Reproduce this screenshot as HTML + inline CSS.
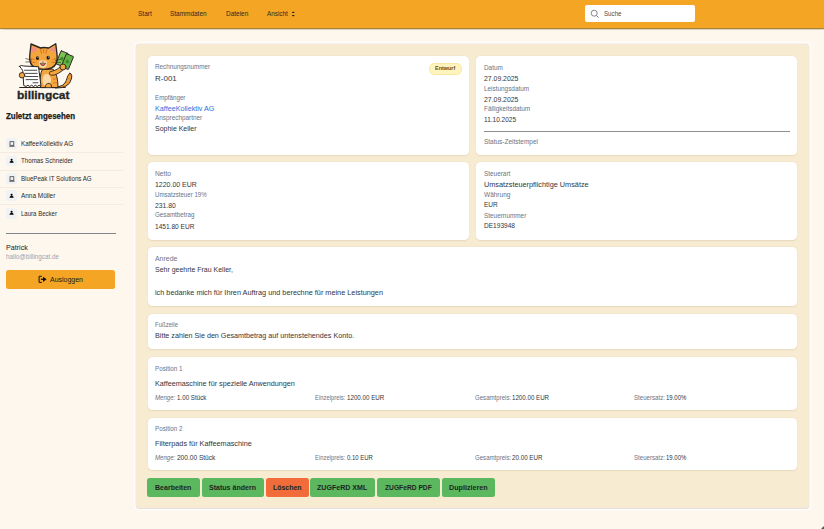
<!DOCTYPE html>
<html><head><meta charset="utf-8"><style>
html,body{margin:0;padding:0;width:824px;height:529px;overflow:hidden;background:#FEF7EE;font-family:"Liberation Sans",sans-serif}
.t{position:absolute;white-space:nowrap}
.b{position:absolute}
</style></head><body>
<div class="b" style="left:0.00px;top:0.00px;width:824.00px;height:28.00px;background:#F4A524;border-radius:0px;box-shadow:0 1px 0 #A88534, 0 1.6px 1px rgba(120,100,60,.25);z-index:2"></div>
<div class="t" style="left:137.60px;top:10.02px;font-size:7px;line-height:7px;color:#2E2A22;font-weight:normal;font-style:normal;transform:scaleX(0.934);transform-origin:0 0;z-index:3">Start</div>
<div class="t" style="left:170.40px;top:10.02px;font-size:7px;line-height:7px;color:#2E2A22;font-weight:normal;font-style:normal;transform:scaleX(0.922);transform-origin:0 0;z-index:3">Stammdaten</div>
<div class="t" style="left:225.60px;top:10.02px;font-size:7px;line-height:7px;color:#2E2A22;font-weight:normal;font-style:normal;transform:scaleX(0.924);transform-origin:0 0;z-index:3">Dateien</div>
<div class="t" style="left:266.90px;top:10.02px;font-size:7px;line-height:7px;color:#2E2A22;font-weight:normal;font-style:normal;transform:scaleX(0.902);transform-origin:0 0;z-index:3">Ansicht</div>
<svg class="b" style="left:291.3px;top:10.8px;z-index:3" width="4.5" height="6" viewBox="0 0 4.5 6"><path d="M0.6 2.1 L2.25 0.4 L3.9 2.1 Z M0.6 3.9 L2.25 5.6 L3.9 3.9 Z" fill="#1E1E1E"/></svg>
<div class="b" style="left:585.00px;top:4.50px;width:110.30px;height:17.90px;background:#FFFFFF;border-radius:2px;z-index:3"></div>
<svg class="b" style="left:589.5px;top:8.5px;z-index:4" width="10" height="10" viewBox="0 0 10 10"><circle cx="4.2" cy="4.2" r="3" stroke="#6B6B6B" stroke-width="0.8" fill="none"/><path d="M6.4 6.4 L8.6 8.6" stroke="#6B6B6B" stroke-width="0.9"/></svg>
<div class="t" style="left:604.00px;top:10.74px;font-size:6.5px;line-height:6.5px;color:#4A4A4A;font-weight:normal;font-style:normal;transform:scaleX(0.950);transform-origin:0 0;z-index:4">Suche</div>
<svg class="b" style="left:14px;top:38px" width="64.125" height="52" viewBox="0 0 513 416">
  <g stroke="#2A2420" stroke-linejoin="round" stroke-linecap="round">
  <!-- ground -->
  <path d="M46 396 H410" stroke-width="9"/>
  <!-- tail -->
  <path d="M330 392 Q400 392 418 340 Q428 300 446 280 Q470 290 458 330 Q440 405 330 400 Z" fill="#F2A23A" stroke-width="8"/>
  <path d="M395 378 L410 390 M414 352 L432 360 M426 322 L446 328 M436 296 L455 300" stroke="#D9741E" stroke-width="7"/>
  <!-- body -->
  <path d="M212 394 Q200 300 228 250 L310 248 Q352 290 352 394 Z" fill="#F4A63E" stroke-width="8"/>
  <ellipse cx="262" cy="338" rx="34" ry="52" fill="#FBD9A8" stroke="none"/>
  <path d="M305 300 L325 296 M315 330 L338 326 M318 360 L342 356" stroke="#D9741E" stroke-width="7"/>
  <path d="M250 394 Q250 362 282 362 Q306 368 300 394" fill="#F4A63E" stroke-width="7"/>
  <!-- raised arm -->
  <path d="M300 282 Q345 280 392 232" fill="none" stroke="#2A2420" stroke-width="38"/>
  <path d="M300 282 Q345 280 392 232" fill="none" stroke="#F4A63E" stroke-width="26"/>
  <!-- money -->
  <g transform="rotate(22 410 180)">
    <rect x="350" y="120" width="62" height="112" rx="4" fill="#7CC454" stroke-width="7"/>
    <rect x="398" y="126" width="62" height="112" rx="4" fill="#66B446" stroke-width="7"/>
    <circle cx="381" cy="176" r="14" fill="#3E8A2E" stroke="none"/>
    <circle cx="429" cy="182" r="14" fill="#3E8A2E" stroke="none"/>
  </g>
  <circle cx="392" cy="232" r="24" fill="#F4A63E" stroke-width="7"/>
  <!-- head -->
  <path d="M126 140 L136 48 L212 80 Q235 72 278 80 L334 46 L345 140 Q352 215 300 240 Q235 262 172 240 Q118 215 126 140 Z" fill="#F4A63E" stroke-width="11"/>
  <path d="M146 68 L192 90 L146 118 Z M322 68 L282 90 L328 118 Z" fill="#F08C8C" stroke="none"/>
  <path d="M262 185 Q231 170 200 185 Q190 235 231 240 Q272 235 262 185 Z" fill="#FBD9A8" stroke="none"/>
  <path d="M212 92 L220 122 M238 86 L238 118 M264 92 L256 122 M140 165 L162 172 M332 165 L310 172 M150 195 L168 194 M320 195 L302 194" stroke="#D9741E" stroke-width="8"/>
  <ellipse cx="188" cy="160" rx="13" ry="15" fill="#221A16" stroke="none"/>
  <ellipse cx="273" cy="157" rx="13" ry="15" fill="#221A16" stroke="none"/>
  <circle cx="192" cy="154" r="4" fill="#FFF" stroke="none"/>
  <circle cx="277" cy="151" r="4" fill="#FFF" stroke="none"/>
  <ellipse cx="231" cy="190" rx="8" ry="5" fill="#C65A4A" stroke="none"/>
  <path d="M210 205 Q231 240 252 205 Z" fill="#E8606A" stroke-width="5"/>
  <path d="M95 165 L140 175 M95 192 L140 190 M330 180 L372 170 M330 195 L372 195" stroke-width="5"/>
  <!-- paper -->
  <path d="M44 226 Q60 214 78 224 L196 230 L216 386 L201 378 L186 388 L171 378 L156 388 L141 378 L126 388 L111 378 L96 388 L78 380 L70 262 Q62 246 44 226 Z" fill="#FFFFFF" stroke-width="8"/>
  <path d="M84 258 H182 M88 283 H186 M92 308 H190 M96 333 H188 M152 358 H192" stroke="#4A4A4A" stroke-width="8"/>
  <circle cx="64" cy="298" r="22" fill="#F4A63E" stroke-width="7"/>
  </g>
</svg>

<div class="t" style="left:17.10px;top:89.84px;font-size:11.5px;line-height:11.5px;color:#1E2626;font-weight:bold;font-style:normal;transform:scaleX(1.040);transform-origin:0 0;-webkit-text-stroke:0.3px #1E2626">billingcat</div>
<div class="t" style="left:6.00px;top:112.31px;font-size:8.8px;line-height:8.8px;color:#1A1A1A;font-weight:bold;font-style:normal;transform:scaleX(0.899);transform-origin:0 0;-webkit-text-stroke:0.25px #1A1A1A">Zuletzt angesehen</div>
<div class="b" style="left:5.80px;top:138.10px;width:11.20px;height:10.90px;background:#F0F2F4;border-radius:2px;"></div>
<svg class="b" style="left:8.6px;top:140.70px" width="6" height="6" viewBox="0 0 6 6"><rect x="1" y="0.7" width="3.8" height="3.6" fill="none" stroke="#444" stroke-width="0.8"/><path d="M0.3 5.3 H5.6" stroke="#444" stroke-width="0.8"/></svg>
<div class="t" style="left:20.80px;top:140.08px;font-size:7.4px;line-height:7.4px;color:#2A2A2A;font-weight:normal;font-style:normal;transform:scaleX(0.854);transform-origin:0 0;">KaffeeKollektiv AG</div>
<div class="b" style="left:0.00px;top:152.20px;width:123.00px;height:0.60px;background:#F4ECE2;border-radius:0px;"></div>
<div class="b" style="left:5.80px;top:155.50px;width:11.20px;height:10.90px;background:#F0F2F4;border-radius:2px;"></div>
<svg class="b" style="left:8.6px;top:158.10px" width="6" height="6" viewBox="0 0 6 6"><circle cx="2.6" cy="1.7" r="1.05" fill="#000"/><path d="M0.5 4.8 Q0.6 3.3 1.9 3.0 L2.0 2.4 H3.2 L3.3 3.0 Q4.6 3.3 4.7 4.8 Z" fill="#000"/></svg>
<div class="t" style="left:20.80px;top:157.48px;font-size:7.4px;line-height:7.4px;color:#2A2A2A;font-weight:normal;font-style:normal;transform:scaleX(0.837);transform-origin:0 0;">Thomas Schneider</div>
<div class="b" style="left:0.00px;top:169.60px;width:123.00px;height:0.60px;background:#F4ECE2;border-radius:0px;"></div>
<div class="b" style="left:5.80px;top:172.90px;width:11.20px;height:10.90px;background:#F0F2F4;border-radius:2px;"></div>
<svg class="b" style="left:8.6px;top:175.50px" width="6" height="6" viewBox="0 0 6 6"><rect x="1" y="0.7" width="3.8" height="3.6" fill="none" stroke="#444" stroke-width="0.8"/><path d="M0.3 5.3 H5.6" stroke="#444" stroke-width="0.8"/></svg>
<div class="t" style="left:20.80px;top:174.88px;font-size:7.4px;line-height:7.4px;color:#2A2A2A;font-weight:normal;font-style:normal;transform:scaleX(0.832);transform-origin:0 0;">BluePeak IT Solutions AG</div>
<div class="b" style="left:0.00px;top:187.00px;width:123.00px;height:0.60px;background:#F4ECE2;border-radius:0px;"></div>
<div class="b" style="left:5.80px;top:190.30px;width:11.20px;height:10.90px;background:#F0F2F4;border-radius:2px;"></div>
<svg class="b" style="left:8.6px;top:192.90px" width="6" height="6" viewBox="0 0 6 6"><circle cx="2.6" cy="1.7" r="1.05" fill="#000"/><path d="M0.5 4.8 Q0.6 3.3 1.9 3.0 L2.0 2.4 H3.2 L3.3 3.0 Q4.6 3.3 4.7 4.8 Z" fill="#000"/></svg>
<div class="t" style="left:20.80px;top:192.28px;font-size:7.4px;line-height:7.4px;color:#2A2A2A;font-weight:normal;font-style:normal;transform:scaleX(0.871);transform-origin:0 0;">Anna Müller</div>
<div class="b" style="left:0.00px;top:204.40px;width:123.00px;height:0.60px;background:#F4ECE2;border-radius:0px;"></div>
<div class="b" style="left:5.80px;top:207.70px;width:11.20px;height:10.90px;background:#F0F2F4;border-radius:2px;"></div>
<svg class="b" style="left:8.6px;top:210.30px" width="6" height="6" viewBox="0 0 6 6"><circle cx="2.6" cy="1.7" r="1.05" fill="#000"/><path d="M0.5 4.8 Q0.6 3.3 1.9 3.0 L2.0 2.4 H3.2 L3.3 3.0 Q4.6 3.3 4.7 4.8 Z" fill="#000"/></svg>
<div class="t" style="left:20.80px;top:209.68px;font-size:7.4px;line-height:7.4px;color:#2A2A2A;font-weight:normal;font-style:normal;transform:scaleX(0.818);transform-origin:0 0;">Laura Becker</div>
<div class="b" style="left:5.80px;top:232.70px;width:109.80px;height:1.00px;background:#80858C;border-radius:0px;"></div>
<div class="t" style="left:5.80px;top:243.50px;font-size:7.5px;line-height:7.5px;color:#1A1A1A;font-weight:normal;font-style:normal;transform:scaleX(0.951);transform-origin:0 0;">Patrick</div>
<div class="t" style="left:5.80px;top:254.24px;font-size:6.5px;line-height:6.5px;color:#9AA3AF;font-weight:normal;font-style:normal;transform:scaleX(0.970);transform-origin:0 0;">hallo@billingcat.de</div>
<div class="b" style="left:5.80px;top:270.30px;width:109.50px;height:18.30px;background:#F4A524;border-radius:2.5px;"></div>
<svg class="b" style="left:37.5px;top:275px" width="10" height="9" viewBox="0 0 10 9"><path d="M3.4 1.3 H1.1 V7.4 H3.4" stroke="#111" stroke-width="1" fill="none" stroke-linejoin="round" stroke-linecap="round"/><path d="M2.9 4.3 H6" stroke="#111" stroke-width="1.3"/><path d="M5.0 1.7 L8.6 4.3 L5.0 6.9 Z" fill="#111"/></svg>
<div class="t" style="left:49.90px;top:275.50px;font-size:7.5px;line-height:7.5px;color:#1A1A1A;font-weight:normal;font-style:normal;transform:scaleX(0.931);transform-origin:0 0;">Ausloggen</div>
<div class="b" style="left:136.30px;top:44.40px;width:672.40px;height:463.80px;background:#F7EBD1;border-radius:3.5px;box-shadow:0 0 0 0.5px rgba(175,170,165,.22), 0 0.6px 0.8px rgba(140,140,150,.2), 0 0 2.5px 1.8px rgba(255,255,255,.9)"></div>
<div class="b" style="left:147.60px;top:55.70px;width:321.00px;height:99.00px;background:#FFFFFF;border-radius:4.5px;box-shadow:0 0.5px 1.5px rgba(120,90,40,.12)"></div>
<div class="b" style="left:476.20px;top:55.70px;width:321.00px;height:99.00px;background:#FFFFFF;border-radius:4.5px;box-shadow:0 0.5px 1.5px rgba(120,90,40,.12)"></div>
<div class="b" style="left:147.60px;top:162.00px;width:321.00px;height:77.50px;background:#FFFFFF;border-radius:4.5px;box-shadow:0 0.5px 1.5px rgba(120,90,40,.12)"></div>
<div class="b" style="left:476.20px;top:162.00px;width:321.00px;height:77.50px;background:#FFFFFF;border-radius:4.5px;box-shadow:0 0.5px 1.5px rgba(120,90,40,.12)"></div>
<div class="b" style="left:147.60px;top:247.00px;width:649.60px;height:58.90px;background:#FFFFFF;border-radius:4.5px;box-shadow:0 0.5px 1.5px rgba(120,90,40,.12)"></div>
<div class="b" style="left:147.60px;top:313.50px;width:649.60px;height:35.80px;background:#FFFFFF;border-radius:4.5px;box-shadow:0 0.5px 1.5px rgba(120,90,40,.12)"></div>
<div class="b" style="left:147.60px;top:356.80px;width:649.60px;height:53.30px;background:#FFFFFF;border-radius:4.5px;box-shadow:0 0.5px 1.5px rgba(120,90,40,.12)"></div>
<div class="b" style="left:147.60px;top:417.50px;width:649.60px;height:52.80px;background:#FFFFFF;border-radius:4.5px;box-shadow:0 0.5px 1.5px rgba(120,90,40,.12)"></div>
<div class="t" style="left:155.00px;top:64.32px;font-size:6.4px;line-height:6.4px;color:#6B7385;font-weight:normal;font-style:normal;transform:scaleX(0.988);transform-origin:0 0;">Rechnungsnummer</div>
<div class="t" style="left:155.00px;top:74.78px;font-size:8px;line-height:8px;color:#33363C;font-weight:normal;font-style:normal;">R-001</div>
<div class="t" style="left:155.00px;top:94.62px;font-size:6.4px;line-height:6.4px;color:#6B7385;font-weight:normal;font-style:normal;transform:scaleX(0.974);transform-origin:0 0;">Empfänger</div>
<div class="t" style="left:155.00px;top:104.97px;font-size:7.3px;line-height:7.3px;color:#2F6FE0;font-weight:normal;font-style:normal;transform:scaleX(0.985);transform-origin:0 0;">KaffeeKollektiv AG</div>
<div class="t" style="left:155.00px;top:115.42px;font-size:6.4px;line-height:6.4px;color:#6B7385;font-weight:normal;font-style:normal;">Ansprechpartner</div>
<div class="t" style="left:155.00px;top:125.47px;font-size:7.3px;line-height:7.3px;color:#33363C;font-weight:normal;font-style:normal;transform:scaleX(0.958);transform-origin:0 0;">Sophie Keller</div>
<div class="b" style="left:428.50px;top:62.60px;width:33.50px;height:12.20px;background:#FEF4BE;border-radius:6px;box-shadow:inset 0 0 0 0.7px #F8E49C"></div>
<div class="t" style="left:435.00px;top:66.03px;font-size:5.8px;line-height:5.8px;color:#6E4A10;font-weight:bold;font-style:normal;transform:scaleX(0.940);transform-origin:0 0;">Entwurf</div>
<div class="t" style="left:484.00px;top:64.72px;font-size:6.4px;line-height:6.4px;color:#6B7385;font-weight:normal;font-style:normal;">Datum</div>
<div class="t" style="left:484.00px;top:74.87px;font-size:7.3px;line-height:7.3px;color:#33363C;font-weight:normal;font-style:normal;transform:scaleX(0.942);transform-origin:0 0;">27.09.2025</div>
<div class="t" style="left:484.00px;top:85.52px;font-size:6.4px;line-height:6.4px;color:#6B7385;font-weight:normal;font-style:normal;">Leistungsdatum</div>
<div class="t" style="left:484.00px;top:95.77px;font-size:7.3px;line-height:7.3px;color:#33363C;font-weight:normal;font-style:normal;transform:scaleX(0.942);transform-origin:0 0;">27.09.2025</div>
<div class="t" style="left:484.00px;top:106.32px;font-size:6.4px;line-height:6.4px;color:#6B7385;font-weight:normal;font-style:normal;">Fälligkeitsdatum</div>
<div class="t" style="left:484.00px;top:115.87px;font-size:7.3px;line-height:7.3px;color:#33363C;font-weight:normal;font-style:normal;transform:scaleX(0.889);transform-origin:0 0;">11.10.2025</div>
<div class="b" style="left:484.00px;top:131.20px;width:305.80px;height:1.00px;background:#8E8E8E;border-radius:0px;"></div>
<div class="t" style="left:484.00px;top:138.82px;font-size:6.4px;line-height:6.4px;color:#6B7385;font-weight:normal;font-style:normal;transform:scaleX(1.012);transform-origin:0 0;">Status-Zeitstempel</div>
<div class="t" style="left:155.00px;top:170.62px;font-size:6.4px;line-height:6.4px;color:#6B7385;font-weight:normal;font-style:normal;transform:scaleX(1.046);transform-origin:0 0;">Netto</div>
<div class="t" style="left:155.00px;top:180.87px;font-size:7.3px;line-height:7.3px;color:#33363C;font-weight:normal;font-style:normal;transform:scaleX(0.954);transform-origin:0 0;">1220.00 EUR</div>
<div class="t" style="left:155.00px;top:191.62px;font-size:6.4px;line-height:6.4px;color:#6B7385;font-weight:normal;font-style:normal;transform:scaleX(0.956);transform-origin:0 0;">Umsatzsteuer 19%</div>
<div class="t" style="left:155.00px;top:201.77px;font-size:7.3px;line-height:7.3px;color:#33363C;font-weight:normal;font-style:normal;transform:scaleX(0.932);transform-origin:0 0;">231.80</div>
<div class="t" style="left:155.00px;top:212.42px;font-size:6.4px;line-height:6.4px;color:#6B7385;font-weight:normal;font-style:normal;transform:scaleX(0.974);transform-origin:0 0;">Gesamtbetrag</div>
<div class="t" style="left:155.00px;top:222.67px;font-size:7.3px;line-height:7.3px;color:#33363C;font-weight:normal;font-style:normal;transform:scaleX(0.899);transform-origin:0 0;">1451.80 EUR</div>
<div class="t" style="left:484.00px;top:170.62px;font-size:6.4px;line-height:6.4px;color:#6B7385;font-weight:normal;font-style:normal;">Steuerart</div>
<div class="t" style="left:484.00px;top:180.67px;font-size:7.3px;line-height:7.3px;color:#33363C;font-weight:normal;font-style:normal;">Umsatzsteuerpflichtige Umsätze</div>
<div class="t" style="left:484.00px;top:191.62px;font-size:6.4px;line-height:6.4px;color:#6B7385;font-weight:normal;font-style:normal;transform:scaleX(1.017);transform-origin:0 0;">Währung</div>
<div class="t" style="left:484.00px;top:201.47px;font-size:7.3px;line-height:7.3px;color:#33363C;font-weight:normal;font-style:normal;transform:scaleX(0.895);transform-origin:0 0;">EUR</div>
<div class="t" style="left:484.00px;top:212.52px;font-size:6.4px;line-height:6.4px;color:#6B7385;font-weight:normal;font-style:normal;">Steuernummer</div>
<div class="t" style="left:484.00px;top:222.17px;font-size:7.3px;line-height:7.3px;color:#33363C;font-weight:normal;font-style:normal;transform:scaleX(0.899);transform-origin:0 0;">DE193948</div>
<div class="t" style="left:155.00px;top:256.32px;font-size:6.4px;line-height:6.4px;color:#6B7385;font-weight:normal;font-style:normal;transform:scaleX(1.085);transform-origin:0 0;">Anrede</div>
<div class="t" style="left:155.00px;top:266.17px;font-size:7.3px;line-height:7.3px;color:#33363C;font-weight:normal;font-style:normal;transform:scaleX(0.956);transform-origin:0 0;">Sehr geehrte Frau Keller,</div>
<div class="t" style="left:155.00px;top:288.87px;font-size:7.3px;line-height:7.3px;color:#33363C;font-weight:normal;font-style:normal;">ich bedanke mich für Ihren Auftrag und berechne für meine Leistungen</div>
<div class="t" style="left:155.00px;top:322.42px;font-size:6.4px;line-height:6.4px;color:#6B7385;font-weight:normal;font-style:normal;transform:scaleX(0.937);transform-origin:0 0;">Fußzeile</div>
<div class="t" style="left:155.00px;top:332.27px;font-size:7.3px;line-height:7.3px;color:#33363C;font-weight:normal;font-style:normal;transform:scaleX(0.984);transform-origin:0 0;">Bitte zahlen Sie den Gesamtbetrag auf untenstehendes Konto.</div>
<div class="t" style="left:155.00px;top:365.62px;font-size:6.4px;line-height:6.4px;color:#6B7385;font-weight:normal;font-style:normal;transform:scaleX(0.978);transform-origin:0 0;">Position 1</div>
<div class="t" style="left:155.00px;top:379.87px;font-size:7.3px;line-height:7.3px;color:#33363C;font-weight:normal;font-style:normal;transform:scaleX(0.989);transform-origin:0 0;">Kaffeemaschine für spezielle Anwendungen</div>
<div class="t" style="left:155.00px;top:394.76px;font-size:6.6px;line-height:6.6px;color:#6B7385;font-weight:normal;font-style:italic;transform:scaleX(0.922);transform-origin:0 0;">Menge:</div>
<div class="t" style="left:176.90px;top:394.76px;font-size:6.6px;line-height:6.6px;color:#33363C;font-weight:normal;font-style:normal;transform:scaleX(0.943);transform-origin:0 0;">1.00 Stück</div>
<div class="t" style="left:314.90px;top:394.76px;font-size:6.6px;line-height:6.6px;color:#6B7385;font-weight:normal;font-style:normal;transform:scaleX(0.888);transform-origin:0 0;">Einzelpreis:</div>
<div class="t" style="left:347.40px;top:394.76px;font-size:6.6px;line-height:6.6px;color:#33363C;font-weight:normal;font-style:normal;transform:scaleX(0.941);transform-origin:0 0;">1200.00 EUR</div>
<div class="t" style="left:474.60px;top:394.76px;font-size:6.6px;line-height:6.6px;color:#6B7385;font-weight:normal;font-style:normal;transform:scaleX(0.922);transform-origin:0 0;">Gesamtpreis:</div>
<div class="t" style="left:512.10px;top:394.76px;font-size:6.6px;line-height:6.6px;color:#33363C;font-weight:normal;font-style:normal;transform:scaleX(0.936);transform-origin:0 0;">1200.00 EUR</div>
<div class="t" style="left:633.60px;top:394.76px;font-size:6.6px;line-height:6.6px;color:#6B7385;font-weight:normal;font-style:normal;transform:scaleX(0.926);transform-origin:0 0;">Steuersatz:</div>
<div class="t" style="left:666.30px;top:394.76px;font-size:6.6px;line-height:6.6px;color:#33363C;font-weight:normal;font-style:normal;transform:scaleX(0.907);transform-origin:0 0;">19.00%</div>
<div class="t" style="left:155.00px;top:426.02px;font-size:6.4px;line-height:6.4px;color:#6B7385;font-weight:normal;font-style:normal;transform:scaleX(0.978);transform-origin:0 0;">Position 2</div>
<div class="t" style="left:155.00px;top:440.27px;font-size:7.3px;line-height:7.3px;color:#33363C;font-weight:normal;font-style:normal;">Filterpads für Kaffeemaschine</div>
<div class="t" style="left:155.00px;top:455.16px;font-size:6.6px;line-height:6.6px;color:#6B7385;font-weight:normal;font-style:italic;transform:scaleX(0.922);transform-origin:0 0;">Menge:</div>
<div class="t" style="left:176.90px;top:455.16px;font-size:6.6px;line-height:6.6px;color:#33363C;font-weight:normal;font-style:normal;">200.00 Stück</div>
<div class="t" style="left:314.90px;top:455.16px;font-size:6.6px;line-height:6.6px;color:#6B7385;font-weight:normal;font-style:normal;transform:scaleX(0.888);transform-origin:0 0;">Einzelpreis:</div>
<div class="t" style="left:347.40px;top:455.16px;font-size:6.6px;line-height:6.6px;color:#33363C;font-weight:normal;font-style:normal;transform:scaleX(0.902);transform-origin:0 0;">0.10 EUR</div>
<div class="t" style="left:474.60px;top:455.16px;font-size:6.6px;line-height:6.6px;color:#6B7385;font-weight:normal;font-style:normal;transform:scaleX(0.922);transform-origin:0 0;">Gesamtpreis:</div>
<div class="t" style="left:512.10px;top:455.16px;font-size:6.6px;line-height:6.6px;color:#33363C;font-weight:normal;font-style:normal;transform:scaleX(0.945);transform-origin:0 0;">20.00 EUR</div>
<div class="t" style="left:633.60px;top:455.16px;font-size:6.6px;line-height:6.6px;color:#6B7385;font-weight:normal;font-style:normal;transform:scaleX(0.926);transform-origin:0 0;">Steuersatz:</div>
<div class="t" style="left:666.30px;top:455.16px;font-size:6.6px;line-height:6.6px;color:#33363C;font-weight:normal;font-style:normal;transform:scaleX(0.907);transform-origin:0 0;">19.00%</div>
<div class="b" style="left:147.40px;top:478.30px;width:52.20px;height:18.70px;background:#5CB85F;border-radius:2.5px;"></div>
<div class="t" style="left:155.30px;top:484.89px;font-size:6.8px;line-height:6.8px;color:#20261F;font-weight:bold;font-style:normal;transform:scaleX(1.036);transform-origin:0 0;">Bearbeiten</div>
<div class="b" style="left:201.60px;top:478.30px;width:62.30px;height:18.70px;background:#5CB85F;border-radius:2.5px;"></div>
<div class="t" style="left:209.25px;top:484.89px;font-size:6.8px;line-height:6.8px;color:#20261F;font-weight:bold;font-style:normal;transform:scaleX(1.037);transform-origin:0 0;">Status ändern</div>
<div class="b" style="left:265.60px;top:478.30px;width:43.20px;height:18.70px;background:#F26B3B;border-radius:2.5px;"></div>
<div class="t" style="left:272.95px;top:484.89px;font-size:6.8px;line-height:6.8px;color:#20261F;font-weight:bold;font-style:normal;transform:scaleX(1.019);transform-origin:0 0;">Löschen</div>
<div class="b" style="left:310.40px;top:478.30px;width:64.40px;height:18.70px;background:#5CB85F;border-radius:2.5px;"></div>
<div class="t" style="left:317.45px;top:484.89px;font-size:6.8px;line-height:6.8px;color:#20261F;font-weight:bold;font-style:normal;transform:scaleX(1.040);transform-origin:0 0;">ZUGFeRD XML</div>
<div class="b" style="left:377.20px;top:478.30px;width:62.40px;height:18.70px;background:#5CB85F;border-radius:2.5px;"></div>
<div class="t" style="left:385.00px;top:484.89px;font-size:6.8px;line-height:6.8px;color:#20261F;font-weight:bold;font-style:normal;transform:scaleX(0.983);transform-origin:0 0;">ZUGFeRD PDF</div>
<div class="b" style="left:441.50px;top:478.30px;width:53.90px;height:18.70px;background:#5CB85F;border-radius:2.5px;"></div>
<div class="t" style="left:449.15px;top:484.89px;font-size:6.8px;line-height:6.8px;color:#20261F;font-weight:bold;font-style:normal;transform:scaleX(1.053);transform-origin:0 0;">Duplizieren</div>
<div class="b" style="left:816.00px;top:521.00px;width:44.00px;height:44.00px;background:#2E6B3A;border-radius:22px;"></div>
</body></html>
